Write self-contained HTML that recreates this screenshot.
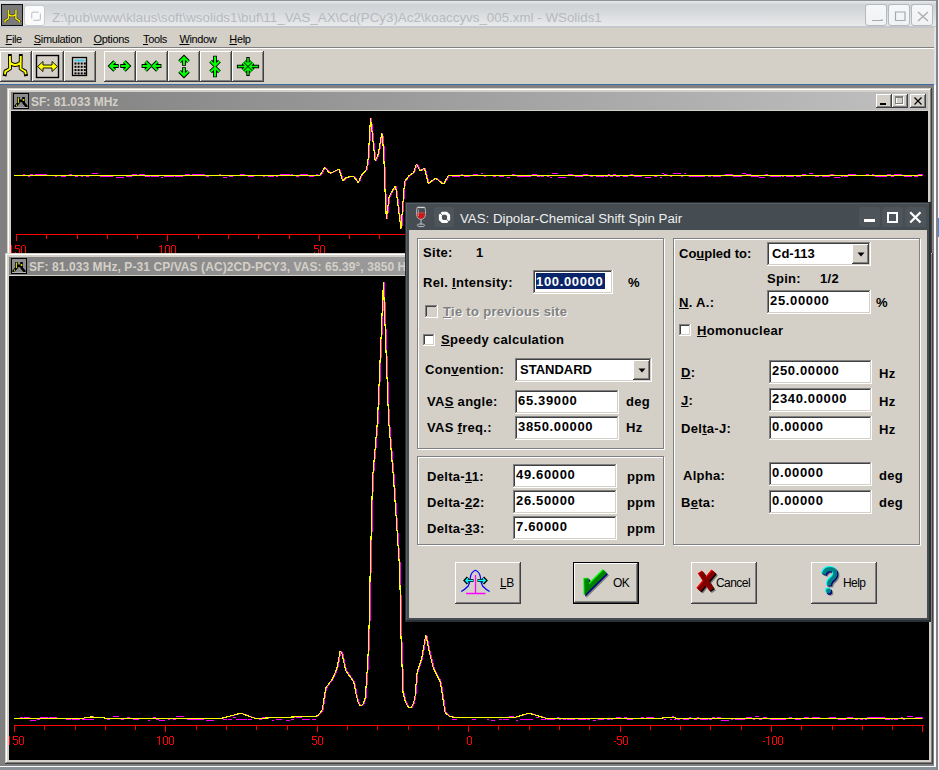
<!DOCTYPE html><html><head><meta charset="utf-8"><style>
html,body{margin:0;padding:0;width:939px;height:770px;overflow:hidden;background:#808080;position:relative}
*{box-sizing:content-box}
.t{position:absolute;white-space:pre;font-family:"Liberation Sans",sans-serif;line-height:1}
.b{font-weight:bold}
svg{position:absolute;left:0;top:0}
</style></head><body><div style="position:absolute;left:0px;top:0px;width:939px;height:28px;background:linear-gradient(#e8eaec 1px,#ced2d5 5px,#d5d8db 11px,#e6e7e9 24px,#e9eaeb 26px,#c4c8cc 26px)"></div><div style="position:absolute;left:0px;top:0px;width:939px;height:1px;background:#8e9297"></div><div style="position:absolute;left:1px;top:4px;width:22px;height:22px;background:#7a7a7a;border:1px solid #111;box-sizing:border-box"></div><svg width="30" height="30" style="left:0;top:0"><g transform="translate(12.2,9.7) scale(0.7) translate(-15.35,-55.9)"><path d="M9.9 55.9 L10.1 68.5 L7.2 70.5 L5.4 71.3 L4.9 74.3 M10.6 63 Q15.3 67 20 63 M20.8 55.9 L20.6 68.5 L23.4 70.5 L25.2 71.3 L25.8 74.3" fill="none" stroke="#202020" stroke-width="3.4" stroke-linejoin="round"/><path d="M9.9 55.9 L10.1 68.5 L7.2 70.5 L5.4 71.3 L4.9 74.3 M10.6 63 Q15.3 67 20 63 M20.8 55.9 L20.6 68.5 L23.4 70.5 L25.2 71.3 L25.8 74.3" fill="none" stroke="#f0e800" stroke-width="2.2" stroke-linejoin="round"/></g></svg><div style="position:absolute;left:24px;top:5px;width:21px;height:21px;background:#fbfbfb;border:1px solid #c8ccd0;border-radius:3px;box-sizing:border-box"></div><svg width="60" height="30" style="left:0;top:0"><path d="M31.7 18.6 L31.7 14 Q31.7 12.2 33.5 12.2 L38.6 12.2 M40.4 13.6 L40.4 18.4 Q40.4 20.3 38.3 20.3 L33.4 20.3" fill="none" stroke="#c4c8cc" stroke-width="1.2"/></svg><div class="t" style="left:52px;top:10.5px;font-size:13.35px;color:#b6babe">Z:\pub\www\klaus\soft\wsolids1\buf\11_VAS_AX\Cd(PCy3)Ac2\koaccyvs_005.xml - WSolids1</div><div style="position:absolute;left:865px;top:4px;width:22px;height:22px;background:linear-gradient(#f6f7f8,#f1f2f3);border:1px solid #b4b9bf;border-radius:3px;box-sizing:border-box"></div><div style="position:absolute;left:888px;top:4px;width:22px;height:22px;background:linear-gradient(#f6f7f8,#f1f2f3);border:1px solid #b4b9bf;border-radius:3px;box-sizing:border-box"></div><div style="position:absolute;left:911px;top:4px;width:22px;height:22px;background:linear-gradient(#f6f7f8,#f1f2f3);border:1px solid #b4b9bf;border-radius:3px;box-sizing:border-box"></div><svg width="939" height="30" style="left:0;top:0" fill="none" stroke="#a4a9ae" stroke-width="1.2"><path d="M872 20.5 L882 20.5 L882 19"/><path d="M895.5 12 L905 12 L905 20.5 L895.5 20.5 Z"/><path d="M918 12 L928 21 M928 12 L918 21"/></svg><div style="position:absolute;left:934px;top:27px;width:2px;height:743px;background:#e4e4e4"></div><div style="position:absolute;left:936px;top:0px;width:2px;height:770px;background:#80868c"></div><div style="position:absolute;left:938px;top:0px;width:1px;height:770px;background:#f4f4f4"></div><div style="position:absolute;left:938px;top:218px;width:1px;height:19px;background:#3a8ee6"></div><div style="position:absolute;left:0px;top:28px;width:934px;height:19px;background:#d4d0c8"></div><div style="position:absolute;left:0px;top:47px;width:934px;height:1px;background:#808080"></div><div style="position:absolute;left:0px;top:48px;width:934px;height:1px;background:#fff"></div><div class="t" style="left:5.5px;top:33.8px;font-size:11px;color:#000;letter-spacing:-0.35px"><u>F</u>ile</div><div class="t" style="left:33.8px;top:33.8px;font-size:11px;color:#000;letter-spacing:-0.35px"><u>S</u>imulation</div><div class="t" style="left:93.6px;top:33.8px;font-size:11px;color:#000;letter-spacing:-0.35px"><u>O</u>ptions</div><div class="t" style="left:143px;top:33.8px;font-size:11px;color:#000;letter-spacing:-0.35px"><u>T</u>ools</div><div class="t" style="left:179.4px;top:33.8px;font-size:11px;color:#000;letter-spacing:-0.35px"><u>W</u>indow</div><div class="t" style="left:229.3px;top:33.8px;font-size:11px;color:#000;letter-spacing:-0.35px"><u>H</u>elp</div><div style="position:absolute;left:0px;top:49px;width:934px;height:35px;background:#d4d0c8"></div><div style="position:absolute;left:0px;top:51px;width:32px;height:31px;background:#404040"></div><div style="position:absolute;left:0px;top:51px;width:31px;height:30px;background:#ffffff"></div><div style="position:absolute;left:1px;top:52px;width:30px;height:29px;background:#808080"></div><div style="position:absolute;left:1px;top:52px;width:29px;height:28px;background:#d4d0c8"></div><div style="position:absolute;left:2px;top:53px;width:28px;height:27px;background:#d4d0c8"></div><div style="position:absolute;left:32px;top:51px;width:32px;height:31px;background:#404040"></div><div style="position:absolute;left:32px;top:51px;width:31px;height:30px;background:#ffffff"></div><div style="position:absolute;left:33px;top:52px;width:30px;height:29px;background:#808080"></div><div style="position:absolute;left:33px;top:52px;width:29px;height:28px;background:#d4d0c8"></div><div style="position:absolute;left:34px;top:53px;width:28px;height:27px;background:#d4d0c8"></div><div style="position:absolute;left:64px;top:51px;width:32px;height:31px;background:#404040"></div><div style="position:absolute;left:64px;top:51px;width:31px;height:30px;background:#ffffff"></div><div style="position:absolute;left:65px;top:52px;width:30px;height:29px;background:#808080"></div><div style="position:absolute;left:65px;top:52px;width:29px;height:28px;background:#d4d0c8"></div><div style="position:absolute;left:66px;top:53px;width:28px;height:27px;background:#d4d0c8"></div><div style="position:absolute;left:104px;top:51px;width:32px;height:31px;background:#404040"></div><div style="position:absolute;left:104px;top:51px;width:31px;height:30px;background:#ffffff"></div><div style="position:absolute;left:105px;top:52px;width:30px;height:29px;background:#808080"></div><div style="position:absolute;left:105px;top:52px;width:29px;height:28px;background:#d4d0c8"></div><div style="position:absolute;left:106px;top:53px;width:28px;height:27px;background:#d4d0c8"></div><div style="position:absolute;left:136px;top:51px;width:32px;height:31px;background:#404040"></div><div style="position:absolute;left:136px;top:51px;width:31px;height:30px;background:#ffffff"></div><div style="position:absolute;left:137px;top:52px;width:30px;height:29px;background:#808080"></div><div style="position:absolute;left:137px;top:52px;width:29px;height:28px;background:#d4d0c8"></div><div style="position:absolute;left:138px;top:53px;width:28px;height:27px;background:#d4d0c8"></div><div style="position:absolute;left:168px;top:51px;width:32px;height:31px;background:#404040"></div><div style="position:absolute;left:168px;top:51px;width:31px;height:30px;background:#ffffff"></div><div style="position:absolute;left:169px;top:52px;width:30px;height:29px;background:#808080"></div><div style="position:absolute;left:169px;top:52px;width:29px;height:28px;background:#d4d0c8"></div><div style="position:absolute;left:170px;top:53px;width:28px;height:27px;background:#d4d0c8"></div><div style="position:absolute;left:200px;top:51px;width:32px;height:31px;background:#404040"></div><div style="position:absolute;left:200px;top:51px;width:31px;height:30px;background:#ffffff"></div><div style="position:absolute;left:201px;top:52px;width:30px;height:29px;background:#808080"></div><div style="position:absolute;left:201px;top:52px;width:29px;height:28px;background:#d4d0c8"></div><div style="position:absolute;left:202px;top:53px;width:28px;height:27px;background:#d4d0c8"></div><div style="position:absolute;left:232px;top:51px;width:32px;height:31px;background:#404040"></div><div style="position:absolute;left:232px;top:51px;width:31px;height:30px;background:#ffffff"></div><div style="position:absolute;left:233px;top:52px;width:30px;height:29px;background:#808080"></div><div style="position:absolute;left:233px;top:52px;width:29px;height:28px;background:#d4d0c8"></div><div style="position:absolute;left:234px;top:53px;width:28px;height:27px;background:#d4d0c8"></div><div style="position:absolute;left:0px;top:84px;width:934px;height:1px;background:#3a6ea5"></div><svg width="300" height="90" style="left:0;top:0"><path d="M9.9 55.9 L10.1 68.5 L7.2 70.5 L5.4 71.3 L4.9 74.3 M10.6 63 Q15.3 67 20 63 M20.8 55.9 L20.6 68.5 L23.4 70.5 L25.2 71.3 L25.8 74.3" fill="none" stroke="#000" stroke-width="3.8" stroke-linejoin="round" stroke-linecap="square"/><path d="M9.9 55.9 L10.1 68.5 L7.2 70.5 L5.4 71.3 L4.9 74.3 M10.6 63 Q15.3 67 20 63 M20.8 55.9 L20.6 68.5 L23.4 70.5 L25.2 71.3 L25.8 74.3" fill="none" stroke="#ffff00" stroke-width="1.9" stroke-linejoin="round" stroke-linecap="butt"/><rect x="36.5" y="55.5" width="22" height="22" fill="none" stroke="#000" stroke-width="1.4"/><path d="M37.5 66.5 L43 61.5 L43 65 L52 65 L52 61.5 L57.5 66.5 L52 71.5 L52 68 L43 68 L43 71.5 Z" fill="#ffff00" stroke="#000" stroke-width="0.9"/><rect x="72.5" y="57.5" width="14" height="18" fill="#d4d0c8" stroke="#000" stroke-width="1.3"/><rect x="74.5" y="59.5" width="10" height="2" fill="#40c8e8"/><rect x="74.5" y="62.5" width="2" height="2" fill="#000"/><rect x="77.6" y="62.5" width="2" height="2" fill="#000"/><rect x="80.7" y="62.5" width="2" height="2" fill="#000"/><rect x="83.8" y="62.5" width="2" height="2" fill="#000"/><rect x="74.5" y="65.8" width="2" height="2" fill="#000"/><rect x="77.6" y="65.8" width="2" height="2" fill="#000"/><rect x="80.7" y="65.8" width="2" height="2" fill="#000"/><rect x="83.8" y="65.8" width="2" height="2" fill="#000"/><rect x="74.5" y="69.1" width="2" height="2" fill="#000"/><rect x="77.6" y="69.1" width="2" height="2" fill="#000"/><rect x="80.7" y="69.1" width="2" height="2" fill="#000"/><rect x="83.8" y="69.1" width="2" height="2" fill="#000"/><rect x="74.5" y="72.4" width="2" height="2" fill="#000"/><rect x="77.6" y="72.4" width="2" height="2" fill="#000"/><rect x="80.7" y="72.4" width="2" height="2" fill="#000"/><rect x="83.8" y="72.4" width="2" height="2" fill="#000"/></svg><svg width="300" height="90" style="left:0;top:0" fill="none" stroke-linejoin="miter" stroke-miterlimit="4" stroke-linecap="butt"><path d="M118.7 66.0 L110.3 66 M114.7 61.6 L110.3 66 L114.7 70.4 M120.29999999999998 66.0 L128.7 66 M124.29999999999998 70.4 L128.7 66 L124.29999999999998 61.6 M141.6 66.0 L150 66 M145.6 70.4 L150 66 L145.6 61.6 M161.4 66.0 L153 66 M157.4 61.6 L153 66 L157.4 70.4 M184.0 65.7 L184 57.3 M188.4 61.699999999999996 L184 57.3 L179.6 61.699999999999996 M184.0 67.3 L184 75.7 M179.6 71.3 L184 75.7 L188.4 71.3 M215.0 55.8 L215 65.6 M210.6 61.199999999999996 L215 65.6 L219.4 61.199999999999996 M215.0 77.2 L215 67.4 M219.4 71.80000000000001 L215 67.4 L210.6 71.80000000000001" stroke="#000" stroke-width="3.8"/><path d="M248 56.900000000000006 L248 64.9 M244.5 61.400000000000006 L248 64.9 L251.5 61.400000000000006 M248 76.1 L248 68.1 M251.5 71.6 L248 68.1 L244.5 71.6 M236.9 66.5 L246.4 66.5 M242.9 70.0 L246.4 66.5 L242.9 63.0 M259.1 66.5 L249.6 66.5 M253.1 63.0 L249.6 66.5 L253.1 70.0" stroke="#000" stroke-width="3.4"/><path d="M117.89999999999999 66.0 L110.3 66 M114.7 61.6 L110.3 66 L114.7 70.4 M121.1 66.0 L128.7 66 M124.29999999999998 70.4 L128.7 66 L124.29999999999998 61.6 M142.4 66.0 L150 66 M145.6 70.4 L150 66 L145.6 61.6 M160.6 66.0 L153 66 M157.4 61.6 L153 66 L157.4 70.4 M184.0 64.89999999999999 L184 57.3 M188.4 61.699999999999996 L184 57.3 L179.6 61.699999999999996 M184.0 68.10000000000001 L184 75.7 M179.6 71.3 L184 75.7 L188.4 71.3 M215 56.599999999999994 L215 65.6 M210.6 61.199999999999996 L215 65.6 L219.4 61.199999999999996 M215 76.4 L215 67.4 M219.4 71.80000000000001 L215 67.4 L210.6 71.80000000000001" stroke="#00ff00" stroke-width="2"/><path d="M248 57.900000000000006 L248 64.9 M244.5 61.400000000000006 L248 64.9 L251.5 61.400000000000006 M248 75.1 L248 68.1 M251.5 71.6 L248 68.1 L244.5 71.6 M237.9 66.5 L246.4 66.5 M242.9 70.0 L246.4 66.5 L242.9 63.0 M258.1 66.5 L249.6 66.5 M253.1 63.0 L249.6 66.5 L253.1 70.0" stroke="#00ff00" stroke-width="1.5"/></svg><div style="position:absolute;left:7px;top:88px;width:925px;height:200px;background:#404040"></div><div style="position:absolute;left:7px;top:88px;width:924px;height:199px;background:#d4d0c8"></div><div style="position:absolute;left:8px;top:89px;width:923px;height:198px;background:#808080"></div><div style="position:absolute;left:8px;top:89px;width:922px;height:197px;background:#fff"></div><div style="position:absolute;left:9px;top:90px;width:921px;height:196px;background:#d4d0c8"></div><div style="position:absolute;left:11px;top:92px;width:917px;height:18px;background:linear-gradient(90deg,#808080,#c0c0c0)"></div><div style="position:absolute;left:11px;top:111px;width:917px;height:170px;background:#000"></div><div style="position:absolute;left:5px;top:253px;width:928px;height:511px;background:#404040"></div><div style="position:absolute;left:5px;top:253px;width:927px;height:510px;background:#d4d0c8"></div><div style="position:absolute;left:6px;top:254px;width:926px;height:509px;background:#808080"></div><div style="position:absolute;left:6px;top:254px;width:925px;height:508px;background:#fff"></div><div style="position:absolute;left:7px;top:255px;width:924px;height:507px;background:#d4d0c8"></div><div style="position:absolute;left:9px;top:257px;width:920px;height:18px;background:linear-gradient(90deg,#808080,#c0c0c0)"></div><div style="position:absolute;left:9px;top:276px;width:920px;height:484px;background:#000"></div><div style="position:absolute;left:0px;top:766px;width:936px;height:1px;background:#fafafa"></div><div style="position:absolute;left:0px;top:767px;width:936px;height:3px;background:#8a9098"></div><div style="position:absolute;left:934px;top:85px;width:2px;height:681px;background:#fafafa"></div><div style="position:absolute;left:13px;top:93px;width:16px;height:16px;background:#000"></div><div style="position:absolute;left:14px;top:94px;width:14px;height:14px;background:#8c8c8c"></div><svg width="16" height="16" style="left:13px;top:93px"><path d="M2 14 L4 11.5 L5.3 10 L5.5 4 M5.5 9 L8 7.5 L10.5 9 M10.5 4 L10.7 10 L12 11.5 L14 14" fill="none" stroke="#000" stroke-width="2.6" stroke-linejoin="round"/><path d="M5.4 4.5 L5.4 10" stroke="#d8d800" stroke-width="1.1"/><circle cx="10.5" cy="7" r="1" fill="#e0e000"/><rect x="3" y="11.5" width="1" height="2" fill="#c8c800"/><rect x="1" y="14" width="14" height="1" fill="#b0b0b0"/></svg><div class="t" style="left:31px;top:96px;font-size:12px;font-weight:bold;color:#d4d0c8">SF: 81.033 MHz</div><div style="position:absolute;left:11px;top:258px;width:16px;height:16px;background:#000"></div><div style="position:absolute;left:12px;top:259px;width:14px;height:14px;background:#8c8c8c"></div><svg width="16" height="16" style="left:11px;top:258px"><path d="M2 14 L4 11.5 L5.3 10 L5.5 4 M5.5 9 L8 7.5 L10.5 9 M10.5 4 L10.7 10 L12 11.5 L14 14" fill="none" stroke="#000" stroke-width="2.6" stroke-linejoin="round"/><path d="M5.4 4.5 L5.4 10" stroke="#d8d800" stroke-width="1.1"/><circle cx="10.5" cy="7" r="1" fill="#e0e000"/><rect x="3" y="11.5" width="1" height="2" fill="#c8c800"/><rect x="1" y="14" width="14" height="1" fill="#b0b0b0"/></svg><div class="t" style="left:29px;top:261px;font-size:12px;font-weight:bold;color:#d4d0c8;letter-spacing:0.08px">SF: 81.033 MHz, P-31 CP/VAS (AC)2CD-PCY3, VAS: 65.39°, 3850 Hz</div><div style="position:absolute;left:876px;top:94px;width:16px;height:14px;background:#404040"></div><div style="position:absolute;left:876px;top:94px;width:15px;height:13px;background:#ffffff"></div><div style="position:absolute;left:877px;top:95px;width:14px;height:12px;background:#808080"></div><div style="position:absolute;left:877px;top:95px;width:13px;height:11px;background:#d4d0c8"></div><div style="position:absolute;left:878px;top:96px;width:12px;height:10px;background:#d4d0c8"></div><div style="position:absolute;left:880px;top:103px;width:6px;height:1.5px;background:#000"></div><div style="position:absolute;left:892px;top:94px;width:16px;height:14px;background:#404040"></div><div style="position:absolute;left:892px;top:94px;width:15px;height:13px;background:#ffffff"></div><div style="position:absolute;left:893px;top:95px;width:14px;height:12px;background:#808080"></div><div style="position:absolute;left:893px;top:95px;width:13px;height:11px;background:#d4d0c8"></div><div style="position:absolute;left:894px;top:96px;width:12px;height:10px;background:#d4d0c8"></div><div style="position:absolute;left:896px;top:97px;width:8px;height:8px;border:1px solid #fff;box-sizing:border-box"></div><div style="position:absolute;left:895px;top:96px;width:8px;height:8px;border:1px solid #808080;border-top-width:2px;box-sizing:border-box"></div><div style="position:absolute;left:910px;top:94px;width:16px;height:14px;background:#404040"></div><div style="position:absolute;left:910px;top:94px;width:15px;height:13px;background:#ffffff"></div><div style="position:absolute;left:911px;top:95px;width:14px;height:12px;background:#808080"></div><div style="position:absolute;left:911px;top:95px;width:13px;height:11px;background:#d4d0c8"></div><div style="position:absolute;left:912px;top:96px;width:12px;height:10px;background:#d4d0c8"></div><svg width="16" height="14" style="left:910px;top:94px"><path d="M4.5 3.5 L11.5 10.5 M11.5 3.5 L4.5 10.5" stroke="#000" stroke-width="1.2"/></svg><svg width="939" height="770" style="left:0;top:0"><defs><clipPath id="c1"><rect x="11" y="111" width="917" height="142"/></clipPath><clipPath id="c2"><rect x="9" y="276" width="920" height="484"/></clipPath></defs><g clip-path="url(#c1)"><path d="M16 234.5 L926 234.5" stroke="#ff0000" stroke-width="1"/><path d="M924.5 234 L924.5 241" stroke="#ff0000" stroke-width="1"/><path d="M894.5 234 L894.5 239" stroke="#ff0000" stroke-width="1"/><path d="M864.5 234 L864.5 239" stroke="#ff0000" stroke-width="1"/><path d="M834.5 234 L834.5 239" stroke="#ff0000" stroke-width="1"/><path d="M803.5 234 L803.5 239" stroke="#ff0000" stroke-width="1"/><path d="M773.5 234 L773.5 241" stroke="#ff0000" stroke-width="1"/><path d="M743.5 234 L743.5 239" stroke="#ff0000" stroke-width="1"/><path d="M712.5 234 L712.5 239" stroke="#ff0000" stroke-width="1"/><path d="M682.5 234 L682.5 239" stroke="#ff0000" stroke-width="1"/><path d="M652.5 234 L652.5 239" stroke="#ff0000" stroke-width="1"/><path d="M622.5 234 L622.5 241" stroke="#ff0000" stroke-width="1"/><path d="M591.5 234 L591.5 239" stroke="#ff0000" stroke-width="1"/><path d="M561.5 234 L561.5 239" stroke="#ff0000" stroke-width="1"/><path d="M531.5 234 L531.5 239" stroke="#ff0000" stroke-width="1"/><path d="M500.5 234 L500.5 239" stroke="#ff0000" stroke-width="1"/><path d="M470.5 234 L470.5 241" stroke="#ff0000" stroke-width="1"/><path d="M440.5 234 L440.5 239" stroke="#ff0000" stroke-width="1"/><path d="M410.5 234 L410.5 239" stroke="#ff0000" stroke-width="1"/><path d="M379.5 234 L379.5 239" stroke="#ff0000" stroke-width="1"/><path d="M349.5 234 L349.5 239" stroke="#ff0000" stroke-width="1"/><path d="M319.5 234 L319.5 241" stroke="#ff0000" stroke-width="1"/><path d="M289.5 234 L289.5 239" stroke="#ff0000" stroke-width="1"/><path d="M258.5 234 L258.5 239" stroke="#ff0000" stroke-width="1"/><path d="M228.5 234 L228.5 239" stroke="#ff0000" stroke-width="1"/><path d="M198.5 234 L198.5 239" stroke="#ff0000" stroke-width="1"/><path d="M167.5 234 L167.5 241" stroke="#ff0000" stroke-width="1"/><path d="M137.5 234 L137.5 239" stroke="#ff0000" stroke-width="1"/><path d="M107.5 234 L107.5 239" stroke="#ff0000" stroke-width="1"/><path d="M77.5 234 L77.5 239" stroke="#ff0000" stroke-width="1"/><path d="M46.5 234 L46.5 239" stroke="#ff0000" stroke-width="1"/><path d="M16.5 234 L16.5 241" stroke="#ff0000" stroke-width="1"/><path d="M11 245h1v1h-1zM9 246h3v1h-3zM11 247h1v1h-1zM11 248h1v1h-1zM11 249h1v1h-1zM11 250h1v1h-1zM11 251h1v1h-1zM11 252h1v1h-1zM11 253h1v1h-1zM15 245h5v1h-5zM15 246h1v1h-1zM15 247h1v1h-1zM15 248h4v1h-4zM19 249h1v1h-1zM19 250h1v1h-1zM19 251h1v1h-1zM15 252h1v1h-1zM19 252h1v1h-1zM16 253h3v1h-3zM22 245h3v1h-3zM21 246h1v1h-1zM25 246h1v1h-1zM21 247h1v1h-1zM25 247h1v1h-1zM21 248h1v1h-1zM25 248h1v1h-1zM21 249h1v1h-1zM25 249h1v1h-1zM21 250h1v1h-1zM25 250h1v1h-1zM21 251h1v1h-1zM25 251h1v1h-1zM21 252h1v1h-1zM25 252h1v1h-1zM22 253h3v1h-3zM161 245h1v1h-1zM159 246h3v1h-3zM161 247h1v1h-1zM161 248h1v1h-1zM161 249h1v1h-1zM161 250h1v1h-1zM161 251h1v1h-1zM161 252h1v1h-1zM161 253h1v1h-1zM166 245h3v1h-3zM165 246h1v1h-1zM169 246h1v1h-1zM165 247h1v1h-1zM169 247h1v1h-1zM165 248h1v1h-1zM169 248h1v1h-1zM165 249h1v1h-1zM169 249h1v1h-1zM165 250h1v1h-1zM169 250h1v1h-1zM165 251h1v1h-1zM169 251h1v1h-1zM165 252h1v1h-1zM169 252h1v1h-1zM166 253h3v1h-3zM172 245h3v1h-3zM171 246h1v1h-1zM175 246h1v1h-1zM171 247h1v1h-1zM175 247h1v1h-1zM171 248h1v1h-1zM175 248h1v1h-1zM171 249h1v1h-1zM175 249h1v1h-1zM171 250h1v1h-1zM175 250h1v1h-1zM171 251h1v1h-1zM175 251h1v1h-1zM171 252h1v1h-1zM175 252h1v1h-1zM172 253h3v1h-3zM314 245h5v1h-5zM314 246h1v1h-1zM314 247h1v1h-1zM314 248h4v1h-4zM318 249h1v1h-1zM318 250h1v1h-1zM318 251h1v1h-1zM314 252h1v1h-1zM318 252h1v1h-1zM315 253h3v1h-3zM321 245h3v1h-3zM320 246h1v1h-1zM324 246h1v1h-1zM320 247h1v1h-1zM324 247h1v1h-1zM320 248h1v1h-1zM324 248h1v1h-1zM320 249h1v1h-1zM324 249h1v1h-1zM320 250h1v1h-1zM324 250h1v1h-1zM320 251h1v1h-1zM324 251h1v1h-1zM320 252h1v1h-1zM324 252h1v1h-1zM321 253h3v1h-3zM470 245h3v1h-3zM469 246h1v1h-1zM473 246h1v1h-1zM469 247h1v1h-1zM473 247h1v1h-1zM469 248h1v1h-1zM473 248h1v1h-1zM469 249h1v1h-1zM473 249h1v1h-1zM469 250h1v1h-1zM473 250h1v1h-1zM469 251h1v1h-1zM473 251h1v1h-1zM469 252h1v1h-1zM473 252h1v1h-1zM470 253h3v1h-3zM616 250h2v1h-2zM619 245h5v1h-5zM619 246h1v1h-1zM619 247h1v1h-1zM619 248h4v1h-4zM623 249h1v1h-1zM623 250h1v1h-1zM623 251h1v1h-1zM619 252h1v1h-1zM623 252h1v1h-1zM620 253h3v1h-3zM626 245h3v1h-3zM625 246h1v1h-1zM629 246h1v1h-1zM625 247h1v1h-1zM629 247h1v1h-1zM625 248h1v1h-1zM629 248h1v1h-1zM625 249h1v1h-1zM629 249h1v1h-1zM625 250h1v1h-1zM629 250h1v1h-1zM625 251h1v1h-1zM629 251h1v1h-1zM625 252h1v1h-1zM629 252h1v1h-1zM626 253h3v1h-3zM765 250h2v1h-2zM770 245h1v1h-1zM768 246h3v1h-3zM770 247h1v1h-1zM770 248h1v1h-1zM770 249h1v1h-1zM770 250h1v1h-1zM770 251h1v1h-1zM770 252h1v1h-1zM770 253h1v1h-1zM775 245h3v1h-3zM774 246h1v1h-1zM778 246h1v1h-1zM774 247h1v1h-1zM778 247h1v1h-1zM774 248h1v1h-1zM778 248h1v1h-1zM774 249h1v1h-1zM778 249h1v1h-1zM774 250h1v1h-1zM778 250h1v1h-1zM774 251h1v1h-1zM778 251h1v1h-1zM774 252h1v1h-1zM778 252h1v1h-1zM775 253h3v1h-3zM781 245h3v1h-3zM780 246h1v1h-1zM784 246h1v1h-1zM780 247h1v1h-1zM784 247h1v1h-1zM780 248h1v1h-1zM784 248h1v1h-1zM780 249h1v1h-1zM784 249h1v1h-1zM780 250h1v1h-1zM784 250h1v1h-1zM780 251h1v1h-1zM784 251h1v1h-1zM780 252h1v1h-1zM784 252h1v1h-1zM781 253h3v1h-3z" fill="#ff0000"/><path d="M14.0 175.0 L318.70 175.00 Q320.0 175.0 320.64 173.87 L323.86 168.13 Q324.5 167.0 325.38 167.96 L329.12 172.04 Q330.0 173.0 331.17 172.43 L337.83 169.17 Q339.0 168.6 339.39 169.84 L342.31 179.26 Q342.7 180.5 343.62 179.58 L345.48 177.72 Q346.4 176.8 347.69 176.64 L352.31 176.06 Q353.6 175.9 354.36 176.96 L357.44 181.24 Q358.2 182.3 358.72 181.11 L361.28 175.19 Q361.8 174.0 362.73 173.09 L365.47 170.41 Q366.4 169.5 366.60 168.21 L368.00 158.99 Q368.2 157.7 368.27 156.40 L370.43 118.30 Q370.5 117.0 370.64 118.29 L372.56 136.41 Q372.7 137.7 372.84 138.99 L374.96 159.21 Q375.1 160.5 375.66 159.33 L377.64 155.17 Q378.2 154.0 378.41 152.72 L381.59 133.58 Q381.8 132.3 381.93 133.59 L383.47 149.21 Q383.6 150.5 383.65 151.80 L385.45 201.90 Q385.5 203.2 385.58 204.50 L386.32 217.30 Q386.4 218.6 386.55 217.31 L388.95 197.19 Q389.1 195.9 389.76 194.78 L394.84 186.12 Q395.5 185.0 395.66 186.29 L400.74 227.31 Q400.9 228.6 401.00 227.30 L404.40 182.70 Q404.5 181.4 405.25 180.34 L408.25 176.06 Q409.0 175.0 410.12 174.34 L412.48 172.96 Q413.6 172.3 413.98 171.06 L416.02 164.44 Q416.4 163.2 416.97 164.37 L419.43 169.33 Q420.0 170.5 421.10 169.81 L423.40 168.39 Q424.5 167.7 424.80 168.96 L427.90 181.94 Q428.2 183.2 429.24 182.42 L434.46 178.48 Q435.5 177.7 436.53 178.50 L442.57 183.20 Q443.6 184.0 444.19 182.84 L447.61 176.16 Q448.2 175.0 449.50 175.00 L922.0 175.0" fill="none" stroke="#ff00ff" stroke-width="1.1" transform="translate(0.8,0.45)" shape-rendering="crispEdges"/><rect x="23" y="174" width="2" height="1" fill="#ff00ff"/><rect x="28" y="176" width="2" height="1" fill="#ff00ff"/><rect x="30" y="174" width="3" height="1" fill="#ff00ff"/><rect x="35" y="174" width="6" height="1" fill="#ff00ff"/><rect x="41" y="174" width="6" height="1" fill="#ff00ff"/><rect x="55" y="176" width="2" height="1" fill="#ff00ff"/><rect x="61" y="176" width="3" height="1" fill="#ff00ff"/><rect x="64" y="176" width="2" height="1" fill="#ff00ff"/><rect x="69" y="174" width="3" height="1" fill="#ff00ff"/><rect x="75" y="176" width="3" height="1" fill="#ff00ff"/><rect x="81" y="176" width="2" height="1" fill="#ff00ff"/><rect x="86" y="176" width="3" height="1" fill="#ff00ff"/><rect x="92" y="173" width="6" height="1" fill="#ff00ff"/><rect x="100" y="176" width="8" height="1" fill="#ff00ff"/><rect x="108" y="176" width="3" height="1" fill="#ff00ff"/><rect x="111" y="176" width="2" height="1" fill="#ff00ff"/><rect x="116" y="177" width="8" height="1" fill="#ff00ff"/><rect x="126" y="176" width="4" height="1" fill="#ff00ff"/><rect x="130" y="176" width="2" height="1" fill="#ff00ff"/><rect x="132" y="174" width="5" height="1" fill="#ff00ff"/><rect x="139" y="174" width="6" height="1" fill="#ff00ff"/><rect x="145" y="176" width="5" height="1" fill="#ff00ff"/><rect x="151" y="176" width="8" height="1" fill="#ff00ff"/><rect x="161" y="177" width="2" height="1" fill="#ff00ff"/><rect x="164" y="176" width="8" height="1" fill="#ff00ff"/><rect x="172" y="176" width="2" height="1" fill="#ff00ff"/><rect x="175" y="176" width="8" height="1" fill="#ff00ff"/><rect x="185" y="174" width="5" height="1" fill="#ff00ff"/><rect x="192" y="174" width="5" height="1" fill="#ff00ff"/><rect x="197" y="174" width="8" height="1" fill="#ff00ff"/><rect x="206" y="176" width="3" height="1" fill="#ff00ff"/><rect x="219" y="174" width="2" height="1" fill="#ff00ff"/><rect x="223" y="177" width="4" height="1" fill="#ff00ff"/><rect x="229" y="176" width="4" height="1" fill="#ff00ff"/><rect x="240" y="174" width="2" height="1" fill="#ff00ff"/><rect x="242" y="174" width="3" height="1" fill="#ff00ff"/><rect x="248" y="176" width="3" height="1" fill="#ff00ff"/><rect x="251" y="176" width="3" height="1" fill="#ff00ff"/><rect x="263" y="176" width="2" height="1" fill="#ff00ff"/><rect x="268" y="176" width="6" height="1" fill="#ff00ff"/><rect x="276" y="176" width="2" height="1" fill="#ff00ff"/><rect x="280" y="174" width="2" height="1" fill="#ff00ff"/><rect x="282" y="174" width="8" height="1" fill="#ff00ff"/><rect x="291" y="174" width="2" height="1" fill="#ff00ff"/><rect x="296" y="176" width="3" height="1" fill="#ff00ff"/><rect x="300" y="174" width="2" height="1" fill="#ff00ff"/><rect x="302" y="174" width="6" height="1" fill="#ff00ff"/><rect x="309" y="176" width="5" height="1" fill="#ff00ff"/><rect x="316" y="174" width="2" height="1" fill="#ff00ff"/><rect x="452" y="176" width="8" height="1" fill="#ff00ff"/><rect x="461" y="174" width="2" height="1" fill="#ff00ff"/><rect x="464" y="176" width="4" height="1" fill="#ff00ff"/><rect x="468" y="176" width="2" height="1" fill="#ff00ff"/><rect x="473" y="174" width="5" height="1" fill="#ff00ff"/><rect x="481" y="173" width="2" height="1" fill="#ff00ff"/><rect x="484" y="176" width="2" height="1" fill="#ff00ff"/><rect x="493" y="176" width="3" height="1" fill="#ff00ff"/><rect x="499" y="176" width="5" height="1" fill="#ff00ff"/><rect x="507" y="177" width="3" height="1" fill="#ff00ff"/><rect x="512" y="174" width="3" height="1" fill="#ff00ff"/><rect x="517" y="176" width="5" height="1" fill="#ff00ff"/><rect x="522" y="176" width="4" height="1" fill="#ff00ff"/><rect x="526" y="176" width="5" height="1" fill="#ff00ff"/><rect x="532" y="174" width="5" height="1" fill="#ff00ff"/><rect x="537" y="176" width="3" height="1" fill="#ff00ff"/><rect x="541" y="176" width="3" height="1" fill="#ff00ff"/><rect x="547" y="176" width="2" height="1" fill="#ff00ff"/><rect x="550" y="177" width="2" height="1" fill="#ff00ff"/><rect x="552" y="173" width="6" height="1" fill="#ff00ff"/><rect x="558" y="177" width="8" height="1" fill="#ff00ff"/><rect x="568" y="174" width="5" height="1" fill="#ff00ff"/><rect x="575" y="176" width="8" height="1" fill="#ff00ff"/><rect x="583" y="174" width="3" height="1" fill="#ff00ff"/><rect x="586" y="174" width="2" height="1" fill="#ff00ff"/><rect x="590" y="176" width="3" height="1" fill="#ff00ff"/><rect x="596" y="176" width="8" height="1" fill="#ff00ff"/><rect x="605" y="176" width="3" height="1" fill="#ff00ff"/><rect x="608" y="174" width="2" height="1" fill="#ff00ff"/><rect x="610" y="176" width="3" height="1" fill="#ff00ff"/><rect x="613" y="174" width="3" height="1" fill="#ff00ff"/><rect x="616" y="176" width="4" height="1" fill="#ff00ff"/><rect x="623" y="176" width="5" height="1" fill="#ff00ff"/><rect x="630" y="174" width="3" height="1" fill="#ff00ff"/><rect x="634" y="176" width="8" height="1" fill="#ff00ff"/><rect x="645" y="177" width="6" height="1" fill="#ff00ff"/><rect x="654" y="176" width="3" height="1" fill="#ff00ff"/><rect x="660" y="177" width="2" height="1" fill="#ff00ff"/><rect x="662" y="173" width="2" height="1" fill="#ff00ff"/><rect x="664" y="174" width="3" height="1" fill="#ff00ff"/><rect x="670" y="176" width="2" height="1" fill="#ff00ff"/><rect x="673" y="173" width="8" height="1" fill="#ff00ff"/><rect x="681" y="176" width="2" height="1" fill="#ff00ff"/><rect x="684" y="173" width="2" height="1" fill="#ff00ff"/><rect x="689" y="176" width="8" height="1" fill="#ff00ff"/><rect x="697" y="176" width="8" height="1" fill="#ff00ff"/><rect x="708" y="176" width="3" height="1" fill="#ff00ff"/><rect x="713" y="176" width="8" height="1" fill="#ff00ff"/><rect x="725" y="174" width="8" height="1" fill="#ff00ff"/><rect x="733" y="176" width="6" height="1" fill="#ff00ff"/><rect x="739" y="176" width="3" height="1" fill="#ff00ff"/><rect x="742" y="173" width="4" height="1" fill="#ff00ff"/><rect x="746" y="174" width="5" height="1" fill="#ff00ff"/><rect x="751" y="176" width="8" height="1" fill="#ff00ff"/><rect x="759" y="177" width="6" height="1" fill="#ff00ff"/><rect x="765" y="174" width="3" height="1" fill="#ff00ff"/><rect x="770" y="176" width="6" height="1" fill="#ff00ff"/><rect x="776" y="176" width="5" height="1" fill="#ff00ff"/><rect x="782" y="176" width="2" height="1" fill="#ff00ff"/><rect x="786" y="176" width="8" height="1" fill="#ff00ff"/><rect x="796" y="176" width="5" height="1" fill="#ff00ff"/><rect x="802" y="174" width="2" height="1" fill="#ff00ff"/><rect x="804" y="174" width="2" height="1" fill="#ff00ff"/><rect x="809" y="173" width="4" height="1" fill="#ff00ff"/><rect x="815" y="176" width="4" height="1" fill="#ff00ff"/><rect x="822" y="176" width="8" height="1" fill="#ff00ff"/><rect x="830" y="174" width="4" height="1" fill="#ff00ff"/><rect x="834" y="177" width="6" height="1" fill="#ff00ff"/><rect x="841" y="176" width="2" height="1" fill="#ff00ff"/><rect x="844" y="176" width="2" height="1" fill="#ff00ff"/><rect x="846" y="176" width="2" height="1" fill="#ff00ff"/><rect x="848" y="174" width="8" height="1" fill="#ff00ff"/><rect x="866" y="174" width="3" height="1" fill="#ff00ff"/><rect x="872" y="174" width="2" height="1" fill="#ff00ff"/><rect x="875" y="176" width="4" height="1" fill="#ff00ff"/><rect x="879" y="176" width="4" height="1" fill="#ff00ff"/><rect x="883" y="176" width="4" height="1" fill="#ff00ff"/><rect x="887" y="174" width="4" height="1" fill="#ff00ff"/><rect x="891" y="176" width="3" height="1" fill="#ff00ff"/><rect x="894" y="174" width="8" height="1" fill="#ff00ff"/><rect x="904" y="176" width="8" height="1" fill="#ff00ff"/><rect x="914" y="176" width="4" height="1" fill="#ff00ff"/><rect x="918" y="174" width="5" height="1" fill="#ff00ff"/><path d="M14.0 175.0 L318.70 175.00 Q320.0 175.0 320.64 173.87 L323.86 168.13 Q324.5 167.0 325.38 167.96 L329.12 172.04 Q330.0 173.0 331.17 172.43 L337.83 169.17 Q339.0 168.6 339.39 169.84 L342.31 179.26 Q342.7 180.5 343.62 179.58 L345.48 177.72 Q346.4 176.8 347.69 176.64 L352.31 176.06 Q353.6 175.9 354.36 176.96 L357.44 181.24 Q358.2 182.3 358.72 181.11 L361.28 175.19 Q361.8 174.0 362.73 173.09 L365.47 170.41 Q366.4 169.5 366.60 168.21 L368.00 158.99 Q368.2 157.7 368.27 156.40 L370.43 118.30 Q370.5 117.0 370.64 118.29 L372.56 136.41 Q372.7 137.7 372.84 138.99 L374.96 159.21 Q375.1 160.5 375.66 159.33 L377.64 155.17 Q378.2 154.0 378.41 152.72 L381.59 133.58 Q381.8 132.3 381.93 133.59 L383.47 149.21 Q383.6 150.5 383.65 151.80 L385.45 201.90 Q385.5 203.2 385.58 204.50 L386.32 217.30 Q386.4 218.6 386.55 217.31 L388.95 197.19 Q389.1 195.9 389.76 194.78 L394.84 186.12 Q395.5 185.0 395.66 186.29 L400.74 227.31 Q400.9 228.6 401.00 227.30 L404.40 182.70 Q404.5 181.4 405.25 180.34 L408.25 176.06 Q409.0 175.0 410.12 174.34 L412.48 172.96 Q413.6 172.3 413.98 171.06 L416.02 164.44 Q416.4 163.2 416.97 164.37 L419.43 169.33 Q420.0 170.5 421.10 169.81 L423.40 168.39 Q424.5 167.7 424.80 168.96 L427.90 181.94 Q428.2 183.2 429.24 182.42 L434.46 178.48 Q435.5 177.7 436.53 178.50 L442.57 183.20 Q443.6 184.0 444.19 182.84 L447.61 176.16 Q448.2 175.0 449.50 175.00 L922.0 175.0" fill="none" stroke="#ffff00" stroke-width="1.1" transform="translate(0,0.45)" shape-rendering="crispEdges"/></g><g clip-path="url(#c2)"><path d="M14 725.5 L924 725.5" stroke="#ff0000" stroke-width="1"/><path d="M922.5 725 L922.5 732" stroke="#ff0000" stroke-width="1"/><path d="M892.5 725 L892.5 730" stroke="#ff0000" stroke-width="1"/><path d="M862.5 725 L862.5 730" stroke="#ff0000" stroke-width="1"/><path d="M832.5 725 L832.5 730" stroke="#ff0000" stroke-width="1"/><path d="M801.5 725 L801.5 730" stroke="#ff0000" stroke-width="1"/><path d="M771.5 725 L771.5 732" stroke="#ff0000" stroke-width="1"/><path d="M741.5 725 L741.5 730" stroke="#ff0000" stroke-width="1"/><path d="M710.5 725 L710.5 730" stroke="#ff0000" stroke-width="1"/><path d="M680.5 725 L680.5 730" stroke="#ff0000" stroke-width="1"/><path d="M650.5 725 L650.5 730" stroke="#ff0000" stroke-width="1"/><path d="M620.5 725 L620.5 732" stroke="#ff0000" stroke-width="1"/><path d="M589.5 725 L589.5 730" stroke="#ff0000" stroke-width="1"/><path d="M559.5 725 L559.5 730" stroke="#ff0000" stroke-width="1"/><path d="M529.5 725 L529.5 730" stroke="#ff0000" stroke-width="1"/><path d="M498.5 725 L498.5 730" stroke="#ff0000" stroke-width="1"/><path d="M468.5 725 L468.5 732" stroke="#ff0000" stroke-width="1"/><path d="M438.5 725 L438.5 730" stroke="#ff0000" stroke-width="1"/><path d="M408.5 725 L408.5 730" stroke="#ff0000" stroke-width="1"/><path d="M377.5 725 L377.5 730" stroke="#ff0000" stroke-width="1"/><path d="M347.5 725 L347.5 730" stroke="#ff0000" stroke-width="1"/><path d="M317.5 725 L317.5 732" stroke="#ff0000" stroke-width="1"/><path d="M287.5 725 L287.5 730" stroke="#ff0000" stroke-width="1"/><path d="M256.5 725 L256.5 730" stroke="#ff0000" stroke-width="1"/><path d="M226.5 725 L226.5 730" stroke="#ff0000" stroke-width="1"/><path d="M196.5 725 L196.5 730" stroke="#ff0000" stroke-width="1"/><path d="M165.5 725 L165.5 732" stroke="#ff0000" stroke-width="1"/><path d="M135.5 725 L135.5 730" stroke="#ff0000" stroke-width="1"/><path d="M105.5 725 L105.5 730" stroke="#ff0000" stroke-width="1"/><path d="M75.5 725 L75.5 730" stroke="#ff0000" stroke-width="1"/><path d="M44.5 725 L44.5 730" stroke="#ff0000" stroke-width="1"/><path d="M14.5 725 L14.5 732" stroke="#ff0000" stroke-width="1"/><path d="M9 736h1v1h-1zM7 737h3v1h-3zM9 738h1v1h-1zM9 739h1v1h-1zM9 740h1v1h-1zM9 741h1v1h-1zM9 742h1v1h-1zM9 743h1v1h-1zM9 744h1v1h-1zM13 736h5v1h-5zM13 737h1v1h-1zM13 738h1v1h-1zM13 739h4v1h-4zM17 740h1v1h-1zM17 741h1v1h-1zM17 742h1v1h-1zM13 743h1v1h-1zM17 743h1v1h-1zM14 744h3v1h-3zM20 736h3v1h-3zM19 737h1v1h-1zM23 737h1v1h-1zM19 738h1v1h-1zM23 738h1v1h-1zM19 739h1v1h-1zM23 739h1v1h-1zM19 740h1v1h-1zM23 740h1v1h-1zM19 741h1v1h-1zM23 741h1v1h-1zM19 742h1v1h-1zM23 742h1v1h-1zM19 743h1v1h-1zM23 743h1v1h-1zM20 744h3v1h-3zM159 736h1v1h-1zM157 737h3v1h-3zM159 738h1v1h-1zM159 739h1v1h-1zM159 740h1v1h-1zM159 741h1v1h-1zM159 742h1v1h-1zM159 743h1v1h-1zM159 744h1v1h-1zM164 736h3v1h-3zM163 737h1v1h-1zM167 737h1v1h-1zM163 738h1v1h-1zM167 738h1v1h-1zM163 739h1v1h-1zM167 739h1v1h-1zM163 740h1v1h-1zM167 740h1v1h-1zM163 741h1v1h-1zM167 741h1v1h-1zM163 742h1v1h-1zM167 742h1v1h-1zM163 743h1v1h-1zM167 743h1v1h-1zM164 744h3v1h-3zM170 736h3v1h-3zM169 737h1v1h-1zM173 737h1v1h-1zM169 738h1v1h-1zM173 738h1v1h-1zM169 739h1v1h-1zM173 739h1v1h-1zM169 740h1v1h-1zM173 740h1v1h-1zM169 741h1v1h-1zM173 741h1v1h-1zM169 742h1v1h-1zM173 742h1v1h-1zM169 743h1v1h-1zM173 743h1v1h-1zM170 744h3v1h-3zM312 736h5v1h-5zM312 737h1v1h-1zM312 738h1v1h-1zM312 739h4v1h-4zM316 740h1v1h-1zM316 741h1v1h-1zM316 742h1v1h-1zM312 743h1v1h-1zM316 743h1v1h-1zM313 744h3v1h-3zM319 736h3v1h-3zM318 737h1v1h-1zM322 737h1v1h-1zM318 738h1v1h-1zM322 738h1v1h-1zM318 739h1v1h-1zM322 739h1v1h-1zM318 740h1v1h-1zM322 740h1v1h-1zM318 741h1v1h-1zM322 741h1v1h-1zM318 742h1v1h-1zM322 742h1v1h-1zM318 743h1v1h-1zM322 743h1v1h-1zM319 744h3v1h-3zM468 736h3v1h-3zM467 737h1v1h-1zM471 737h1v1h-1zM467 738h1v1h-1zM471 738h1v1h-1zM467 739h1v1h-1zM471 739h1v1h-1zM467 740h1v1h-1zM471 740h1v1h-1zM467 741h1v1h-1zM471 741h1v1h-1zM467 742h1v1h-1zM471 742h1v1h-1zM467 743h1v1h-1zM471 743h1v1h-1zM468 744h3v1h-3zM614 741h2v1h-2zM617 736h5v1h-5zM617 737h1v1h-1zM617 738h1v1h-1zM617 739h4v1h-4zM621 740h1v1h-1zM621 741h1v1h-1zM621 742h1v1h-1zM617 743h1v1h-1zM621 743h1v1h-1zM618 744h3v1h-3zM624 736h3v1h-3zM623 737h1v1h-1zM627 737h1v1h-1zM623 738h1v1h-1zM627 738h1v1h-1zM623 739h1v1h-1zM627 739h1v1h-1zM623 740h1v1h-1zM627 740h1v1h-1zM623 741h1v1h-1zM627 741h1v1h-1zM623 742h1v1h-1zM627 742h1v1h-1zM623 743h1v1h-1zM627 743h1v1h-1zM624 744h3v1h-3zM763 741h2v1h-2zM768 736h1v1h-1zM766 737h3v1h-3zM768 738h1v1h-1zM768 739h1v1h-1zM768 740h1v1h-1zM768 741h1v1h-1zM768 742h1v1h-1zM768 743h1v1h-1zM768 744h1v1h-1zM773 736h3v1h-3zM772 737h1v1h-1zM776 737h1v1h-1zM772 738h1v1h-1zM776 738h1v1h-1zM772 739h1v1h-1zM776 739h1v1h-1zM772 740h1v1h-1zM776 740h1v1h-1zM772 741h1v1h-1zM776 741h1v1h-1zM772 742h1v1h-1zM776 742h1v1h-1zM772 743h1v1h-1zM776 743h1v1h-1zM773 744h3v1h-3zM779 736h3v1h-3zM778 737h1v1h-1zM782 737h1v1h-1zM778 738h1v1h-1zM782 738h1v1h-1zM778 739h1v1h-1zM782 739h1v1h-1zM778 740h1v1h-1zM782 740h1v1h-1zM778 741h1v1h-1zM782 741h1v1h-1zM778 742h1v1h-1zM782 742h1v1h-1zM778 743h1v1h-1zM782 743h1v1h-1zM779 744h3v1h-3z" fill="#ff0000"/><path d="M14.0 718.0 L79.70 718.29 Q81.0 718.3 82.26 717.97 L82.74 717.83 Q84.0 717.5 85.29 717.32 L89.71 716.68 Q91.0 716.5 92.30 716.58 L97.70 716.92 Q99.0 717.0 100.29 717.14 L109.71 718.16 Q111.0 718.3 112.30 718.30 L219.70 718.00 Q221.0 718.0 222.26 717.66 L239.44 713.04 Q240.7 712.7 241.92 713.15 L253.78 717.55 Q255.0 718.0 256.30 717.95 L316.20 715.65 Q317.5 715.6 318.31 714.58 L321.39 710.72 Q322.2 709.7 322.40 708.42 L325.50 688.78 Q325.7 687.5 326.48 686.46 L331.92 679.14 Q332.7 678.1 333.19 676.90 L336.51 668.80 Q337.0 667.6 337.23 666.32 L339.97 651.28 Q340.2 650.0 340.81 651.15 L341.49 652.45 Q342.1 653.6 342.37 654.87 L345.33 668.73 Q345.6 670.0 346.35 671.06 L353.05 680.54 Q353.8 681.6 354.04 682.88 L356.26 694.72 Q356.5 696.0 356.86 697.25 L358.14 701.75 Q358.5 703.0 359.33 704.00 L360.17 705.00 Q361.0 706.0 361.83 705.00 L362.67 704.00 Q363.5 703.0 363.87 701.75 L364.93 698.25 Q365.3 697.0 365.39 695.70 L367.71 661.90 Q367.8 660.6 367.85 659.30 L368.95 629.10 Q369.0 627.8 369.03 626.50 L370.17 571.30 Q370.2 570.0 370.23 568.70 L372.47 479.30 Q372.5 478.0 372.61 476.70 L377.39 421.30 Q377.5 420.0 377.56 418.70 L383.34 282.80 Q383.4 281.5 383.45 282.80 L388.55 418.70 Q388.6 420.0 388.71 421.30 L393.39 476.70 Q393.5 478.0 393.59 479.30 L399.61 568.70 Q399.7 570.0 399.73 571.30 L400.97 635.90 Q401.0 637.2 401.05 638.50 L402.95 690.70 Q403.0 692.0 403.32 693.26 L405.18 700.74 Q405.5 702.0 406.17 703.11 L407.83 705.89 Q408.5 707.0 409.62 707.23 L409.88 707.27 Q411.0 707.5 411.63 706.36 L412.87 704.14 Q413.5 703.0 413.77 701.73 L414.73 697.27 Q415.0 696.0 415.11 694.70 L416.89 673.60 Q417.0 672.3 417.40 671.06 L421.20 659.44 Q421.6 658.2 421.82 656.92 L425.58 635.48 Q425.8 634.2 426.06 635.47 L429.54 652.33 Q429.8 653.6 430.12 654.86 L432.98 666.34 Q433.3 667.6 433.89 668.76 L439.81 680.44 Q440.4 681.6 440.59 682.89 L444.81 710.71 Q445.0 712.0 445.96 712.88 L448.74 715.42 Q449.7 716.3 451.00 716.41 L458.70 717.09 Q460.0 717.2 461.30 717.21 L511.70 717.49 Q513.0 717.5 514.24 717.12 L527.36 713.08 Q528.6 712.7 529.85 713.07 L545.35 717.63 Q546.6 718.0 547.90 718.00 L658.70 718.00 Q660.0 718.0 661.28 717.79 L667.72 716.71 Q669.0 716.5 670.28 716.71 L676.72 717.79 Q678.0 718.0 679.30 718.00 L922.0 718.0" fill="none" stroke="#ff00ff" stroke-width="1.1" transform="translate(0.8,0.45)" shape-rendering="crispEdges"/><rect x="20" y="717" width="3" height="1" fill="#ff00ff"/><rect x="24" y="717" width="6" height="1" fill="#ff00ff"/><rect x="30" y="720" width="6" height="1" fill="#ff00ff"/><rect x="37" y="719" width="3" height="1" fill="#ff00ff"/><rect x="40" y="717" width="8" height="1" fill="#ff00ff"/><rect x="49" y="717" width="8" height="1" fill="#ff00ff"/><rect x="66" y="719" width="5" height="1" fill="#ff00ff"/><rect x="72" y="719" width="3" height="1" fill="#ff00ff"/><rect x="75" y="719" width="5" height="1" fill="#ff00ff"/><rect x="82" y="719" width="4" height="1" fill="#ff00ff"/><rect x="86" y="719" width="3" height="1" fill="#ff00ff"/><rect x="89" y="719" width="2" height="1" fill="#ff00ff"/><rect x="91" y="719" width="3" height="1" fill="#ff00ff"/><rect x="94" y="717" width="6" height="1" fill="#ff00ff"/><rect x="101" y="717" width="3" height="1" fill="#ff00ff"/><rect x="107" y="719" width="3" height="1" fill="#ff00ff"/><rect x="113" y="716" width="6" height="1" fill="#ff00ff"/><rect x="121" y="719" width="3" height="1" fill="#ff00ff"/><rect x="127" y="717" width="3" height="1" fill="#ff00ff"/><rect x="133" y="719" width="6" height="1" fill="#ff00ff"/><rect x="148" y="720" width="2" height="1" fill="#ff00ff"/><rect x="153" y="717" width="3" height="1" fill="#ff00ff"/><rect x="156" y="719" width="3" height="1" fill="#ff00ff"/><rect x="159" y="720" width="6" height="1" fill="#ff00ff"/><rect x="168" y="719" width="2" height="1" fill="#ff00ff"/><rect x="173" y="719" width="3" height="1" fill="#ff00ff"/><rect x="176" y="716" width="8" height="1" fill="#ff00ff"/><rect x="187" y="719" width="2" height="1" fill="#ff00ff"/><rect x="189" y="719" width="8" height="1" fill="#ff00ff"/><rect x="197" y="719" width="4" height="1" fill="#ff00ff"/><rect x="201" y="719" width="3" height="1" fill="#ff00ff"/><rect x="206" y="720" width="8" height="1" fill="#ff00ff"/><rect x="223" y="719" width="2" height="1" fill="#ff00ff"/><rect x="225" y="719" width="2" height="1" fill="#ff00ff"/><rect x="228" y="719" width="4" height="1" fill="#ff00ff"/><rect x="233" y="717" width="3" height="1" fill="#ff00ff"/><rect x="236" y="719" width="8" height="1" fill="#ff00ff"/><rect x="244" y="719" width="3" height="1" fill="#ff00ff"/><rect x="248" y="719" width="4" height="1" fill="#ff00ff"/><rect x="259" y="719" width="3" height="1" fill="#ff00ff"/><rect x="262" y="717" width="8" height="1" fill="#ff00ff"/><rect x="272" y="720" width="2" height="1" fill="#ff00ff"/><rect x="276" y="719" width="4" height="1" fill="#ff00ff"/><rect x="280" y="719" width="2" height="1" fill="#ff00ff"/><rect x="286" y="720" width="4" height="1" fill="#ff00ff"/><rect x="291" y="719" width="3" height="1" fill="#ff00ff"/><rect x="296" y="717" width="6" height="1" fill="#ff00ff"/><rect x="302" y="719" width="8" height="1" fill="#ff00ff"/><rect x="312" y="719" width="4" height="1" fill="#ff00ff"/><rect x="452" y="719" width="5" height="1" fill="#ff00ff"/><rect x="457" y="717" width="5" height="1" fill="#ff00ff"/><rect x="463" y="717" width="6" height="1" fill="#ff00ff"/><rect x="472" y="719" width="4" height="1" fill="#ff00ff"/><rect x="487" y="719" width="2" height="1" fill="#ff00ff"/><rect x="491" y="720" width="4" height="1" fill="#ff00ff"/><rect x="496" y="717" width="2" height="1" fill="#ff00ff"/><rect x="499" y="719" width="3" height="1" fill="#ff00ff"/><rect x="503" y="719" width="6" height="1" fill="#ff00ff"/><rect x="509" y="716" width="5" height="1" fill="#ff00ff"/><rect x="516" y="720" width="2" height="1" fill="#ff00ff"/><rect x="520" y="719" width="3" height="1" fill="#ff00ff"/><rect x="523" y="719" width="6" height="1" fill="#ff00ff"/><rect x="529" y="719" width="4" height="1" fill="#ff00ff"/><rect x="536" y="717" width="3" height="1" fill="#ff00ff"/><rect x="541" y="719" width="5" height="1" fill="#ff00ff"/><rect x="547" y="719" width="4" height="1" fill="#ff00ff"/><rect x="551" y="719" width="4" height="1" fill="#ff00ff"/><rect x="557" y="717" width="2" height="1" fill="#ff00ff"/><rect x="559" y="719" width="2" height="1" fill="#ff00ff"/><rect x="563" y="719" width="3" height="1" fill="#ff00ff"/><rect x="567" y="719" width="8" height="1" fill="#ff00ff"/><rect x="578" y="719" width="3" height="1" fill="#ff00ff"/><rect x="581" y="719" width="5" height="1" fill="#ff00ff"/><rect x="587" y="719" width="3" height="1" fill="#ff00ff"/><rect x="593" y="720" width="3" height="1" fill="#ff00ff"/><rect x="598" y="719" width="6" height="1" fill="#ff00ff"/><rect x="607" y="719" width="3" height="1" fill="#ff00ff"/><rect x="611" y="719" width="2" height="1" fill="#ff00ff"/><rect x="616" y="717" width="5" height="1" fill="#ff00ff"/><rect x="624" y="717" width="3" height="1" fill="#ff00ff"/><rect x="627" y="719" width="6" height="1" fill="#ff00ff"/><rect x="641" y="717" width="3" height="1" fill="#ff00ff"/><rect x="646" y="717" width="8" height="1" fill="#ff00ff"/><rect x="664" y="719" width="2" height="1" fill="#ff00ff"/><rect x="670" y="719" width="2" height="1" fill="#ff00ff"/><rect x="672" y="716" width="2" height="1" fill="#ff00ff"/><rect x="674" y="719" width="2" height="1" fill="#ff00ff"/><rect x="677" y="719" width="3" height="1" fill="#ff00ff"/><rect x="683" y="719" width="6" height="1" fill="#ff00ff"/><rect x="689" y="717" width="2" height="1" fill="#ff00ff"/><rect x="694" y="719" width="3" height="1" fill="#ff00ff"/><rect x="697" y="717" width="2" height="1" fill="#ff00ff"/><rect x="700" y="719" width="8" height="1" fill="#ff00ff"/><rect x="709" y="719" width="3" height="1" fill="#ff00ff"/><rect x="712" y="717" width="3" height="1" fill="#ff00ff"/><rect x="717" y="717" width="4" height="1" fill="#ff00ff"/><rect x="721" y="720" width="8" height="1" fill="#ff00ff"/><rect x="731" y="719" width="2" height="1" fill="#ff00ff"/><rect x="735" y="719" width="5" height="1" fill="#ff00ff"/><rect x="740" y="719" width="5" height="1" fill="#ff00ff"/><rect x="746" y="717" width="6" height="1" fill="#ff00ff"/><rect x="753" y="719" width="2" height="1" fill="#ff00ff"/><rect x="755" y="716" width="4" height="1" fill="#ff00ff"/><rect x="759" y="719" width="3" height="1" fill="#ff00ff"/><rect x="763" y="717" width="4" height="1" fill="#ff00ff"/><rect x="770" y="719" width="8" height="1" fill="#ff00ff"/><rect x="778" y="719" width="8" height="1" fill="#ff00ff"/><rect x="789" y="717" width="3" height="1" fill="#ff00ff"/><rect x="795" y="719" width="3" height="1" fill="#ff00ff"/><rect x="798" y="719" width="3" height="1" fill="#ff00ff"/><rect x="804" y="717" width="5" height="1" fill="#ff00ff"/><rect x="812" y="717" width="8" height="1" fill="#ff00ff"/><rect x="829" y="717" width="3" height="1" fill="#ff00ff"/><rect x="832" y="717" width="4" height="1" fill="#ff00ff"/><rect x="838" y="719" width="2" height="1" fill="#ff00ff"/><rect x="840" y="719" width="6" height="1" fill="#ff00ff"/><rect x="847" y="717" width="6" height="1" fill="#ff00ff"/><rect x="855" y="719" width="3" height="1" fill="#ff00ff"/><rect x="860" y="719" width="3" height="1" fill="#ff00ff"/><rect x="865" y="719" width="2" height="1" fill="#ff00ff"/><rect x="867" y="717" width="6" height="1" fill="#ff00ff"/><rect x="873" y="717" width="8" height="1" fill="#ff00ff"/><rect x="881" y="717" width="4" height="1" fill="#ff00ff"/><rect x="885" y="719" width="5" height="1" fill="#ff00ff"/><rect x="891" y="719" width="2" height="1" fill="#ff00ff"/><rect x="894" y="719" width="4" height="1" fill="#ff00ff"/><rect x="901" y="717" width="2" height="1" fill="#ff00ff"/><rect x="903" y="719" width="2" height="1" fill="#ff00ff"/><rect x="907" y="716" width="6" height="1" fill="#ff00ff"/><rect x="915" y="717" width="8" height="1" fill="#ff00ff"/><path d="M14.0 718.0 L79.70 718.29 Q81.0 718.3 82.26 717.97 L82.74 717.83 Q84.0 717.5 85.29 717.32 L89.71 716.68 Q91.0 716.5 92.30 716.58 L97.70 716.92 Q99.0 717.0 100.29 717.14 L109.71 718.16 Q111.0 718.3 112.30 718.30 L219.70 718.00 Q221.0 718.0 222.26 717.66 L239.44 713.04 Q240.7 712.7 241.92 713.15 L253.78 717.55 Q255.0 718.0 256.30 717.95 L316.20 715.65 Q317.5 715.6 318.31 714.58 L321.39 710.72 Q322.2 709.7 322.40 708.42 L325.50 688.78 Q325.7 687.5 326.48 686.46 L331.92 679.14 Q332.7 678.1 333.19 676.90 L336.51 668.80 Q337.0 667.6 337.23 666.32 L339.97 651.28 Q340.2 650.0 340.81 651.15 L341.49 652.45 Q342.1 653.6 342.37 654.87 L345.33 668.73 Q345.6 670.0 346.35 671.06 L353.05 680.54 Q353.8 681.6 354.04 682.88 L356.26 694.72 Q356.5 696.0 356.86 697.25 L358.14 701.75 Q358.5 703.0 359.33 704.00 L360.17 705.00 Q361.0 706.0 361.83 705.00 L362.67 704.00 Q363.5 703.0 363.87 701.75 L364.93 698.25 Q365.3 697.0 365.39 695.70 L367.71 661.90 Q367.8 660.6 367.85 659.30 L368.95 629.10 Q369.0 627.8 369.03 626.50 L370.17 571.30 Q370.2 570.0 370.23 568.70 L372.47 479.30 Q372.5 478.0 372.61 476.70 L377.39 421.30 Q377.5 420.0 377.56 418.70 L383.34 282.80 Q383.4 281.5 383.45 282.80 L388.55 418.70 Q388.6 420.0 388.71 421.30 L393.39 476.70 Q393.5 478.0 393.59 479.30 L399.61 568.70 Q399.7 570.0 399.73 571.30 L400.97 635.90 Q401.0 637.2 401.05 638.50 L402.95 690.70 Q403.0 692.0 403.32 693.26 L405.18 700.74 Q405.5 702.0 406.17 703.11 L407.83 705.89 Q408.5 707.0 409.62 707.23 L409.88 707.27 Q411.0 707.5 411.63 706.36 L412.87 704.14 Q413.5 703.0 413.77 701.73 L414.73 697.27 Q415.0 696.0 415.11 694.70 L416.89 673.60 Q417.0 672.3 417.40 671.06 L421.20 659.44 Q421.6 658.2 421.82 656.92 L425.58 635.48 Q425.8 634.2 426.06 635.47 L429.54 652.33 Q429.8 653.6 430.12 654.86 L432.98 666.34 Q433.3 667.6 433.89 668.76 L439.81 680.44 Q440.4 681.6 440.59 682.89 L444.81 710.71 Q445.0 712.0 445.96 712.88 L448.74 715.42 Q449.7 716.3 451.00 716.41 L458.70 717.09 Q460.0 717.2 461.30 717.21 L511.70 717.49 Q513.0 717.5 514.24 717.12 L527.36 713.08 Q528.6 712.7 529.85 713.07 L545.35 717.63 Q546.6 718.0 547.90 718.00 L658.70 718.00 Q660.0 718.0 661.28 717.79 L667.72 716.71 Q669.0 716.5 670.28 716.71 L676.72 717.79 Q678.0 718.0 679.30 718.00 L922.0 718.0" fill="none" stroke="#ffff00" stroke-width="1.1" transform="translate(0,0.45)" shape-rendering="crispEdges"/></g></svg><div style="position:absolute;left:405px;top:202px;width:526px;height:420px;background:#2a2f33"></div><div style="position:absolute;left:406px;top:203px;width:523px;height:417px;background:#565e65"></div><div style="position:absolute;left:407px;top:204px;width:522px;height:416px;background:#454c52"></div><div style="position:absolute;left:409px;top:230px;width:518px;height:388px;background:#d4d0c8"></div><svg width="939" height="770" style="left:0;top:0"><path d="M416.6 213.2 Q416.4 219.2 421 219.4 Q425.6 219.2 425.4 213.2 Z" fill="#c81a1a"/><path d="M417.6 212.6 L424.4 212.6 L425.4 213.2 L416.6 213.2 Z" fill="#ff4040"/><path d="M417.2 207.3 Q416 211 416.5 214.5 Q417.2 219.2 421 219.4 Q424.8 219.2 425.5 214.5 Q426 211 424.8 207.3 Z" fill="none" stroke="#aeb3b6" stroke-width="1"/><path d="M417.4 207.5 L424.6 207.5" stroke="#d0d4d6" stroke-width="1.2"/><path d="M418.4 209.5 L418.2 216" stroke="#e0e0e0" stroke-width="0.8" opacity="0.7"/><rect x="420.4" y="219.3" width="1.3" height="5.5" fill="#a8acae"/><ellipse cx="421" cy="225.3" rx="3.8" ry="1.4" fill="none" stroke="#b8bcbe" stroke-width="1"/></svg><div style="position:absolute;left:434px;top:207px;width:20px;height:20px;background:#4d555b;border-radius:3px"></div><svg width="939" height="770" style="left:0;top:0"><path d="M442.6 213.2 L446.4 213.2 L448.6 215.4 L448.6 219.3 L446.4 221.5 L442.6 221.5 L440.4 219.3 L440.4 215.4 Z" fill="none" stroke="#fff" stroke-width="3.1"/><path d="M439.2 212.1 L443.4 216.3 M445.6 218.4 L449.8 222.6" stroke="#4d555b" stroke-width="0.9"/></svg><div class="t" style="left:460px;top:212px;font-size:13.25px;color:#eef0f0">VAS: Dipolar-Chemical Shift Spin Pair</div><div style="position:absolute;left:859px;top:207px;width:21px;height:20px;background:#4d555b;border-radius:3px"></div><div style="position:absolute;left:882px;top:207px;width:21px;height:20px;background:#4d555b;border-radius:3px"></div><div style="position:absolute;left:905px;top:207px;width:21px;height:20px;background:#4d555b;border-radius:3px"></div><div style="position:absolute;left:864px;top:219px;width:11px;height:2.5px;background:#fff"></div><div style="position:absolute;left:887px;top:212px;width:11px;height:11px;border:2px solid #fff;box-sizing:border-box"></div><svg width="21" height="21" style="left:905px;top:207px"><path d="M5.2 5.2 L15.5 15.6 M15.5 5.2 L5.2 15.6" stroke="#fff" stroke-width="2.2"/></svg><div style="position:absolute;left:418px;top:239px;width:245px;height:209px;border:1px solid #fff"></div><div style="position:absolute;left:417px;top:238px;width:245px;height:209px;border:1px solid #808080"></div><div style="position:absolute;left:418px;top:457px;width:245px;height:87px;border:1px solid #fff"></div><div style="position:absolute;left:417px;top:456px;width:245px;height:87px;border:1px solid #808080"></div><div style="position:absolute;left:674px;top:239px;width:245px;height:305px;border:1px solid #fff"></div><div style="position:absolute;left:673px;top:238px;width:245px;height:305px;border:1px solid #808080"></div><div class="t" style="left:423px;top:245.6px;font-size:13px;font-weight:bold;color:#000;letter-spacing:0.3px">Site:</div><div class="t" style="left:476px;top:245.6px;font-size:13px;font-weight:bold;color:#000;letter-spacing:0.3px">1</div><div class="t" style="left:423px;top:275.6px;font-size:13px;font-weight:bold;color:#000;letter-spacing:0.3px">Rel. <u>I</u>ntensity:</div><div style="position:absolute;left:533px;top:270px;width:80px;height:24px;background:#fff"></div><div style="position:absolute;left:533px;top:270px;width:79px;height:23px;background:#808080"></div><div style="position:absolute;left:534px;top:271px;width:78px;height:22px;background:#d4d0c8"></div><div style="position:absolute;left:534px;top:271px;width:77px;height:21px;background:#404040"></div><div style="position:absolute;left:535px;top:272px;width:76px;height:20px;background:#fff"></div><div style="position:absolute;left:536px;top:273px;width:69px;height:16px;background:#0a246a"></div><div class="t" style="left:536px;top:274.8px;font-size:13px;font-weight:bold;color:#fff;letter-spacing:0.65px">100.00000</div><div class="t" style="left:628px;top:275.6px;font-size:13px;font-weight:bold;color:#000;letter-spacing:0.3px">%</div><div style="position:absolute;left:425px;top:305px;width:13px;height:13px;background:#fff"></div><div style="position:absolute;left:425px;top:305px;width:12px;height:12px;background:#808080"></div><div style="position:absolute;left:426px;top:306px;width:11px;height:11px;background:#d4d0c8"></div><div style="position:absolute;left:426px;top:306px;width:10px;height:10px;background:#404040"></div><div style="position:absolute;left:427px;top:307px;width:9px;height:9px;background:#d4d0c8"></div><div class="t" style="left:443px;top:305.0px;font-size:13px;font-weight:bold;color:#000;letter-spacing:0.3px;color:#808080;text-shadow:1px 1px 0 #fff"><u>T</u>ie to previous site</div><div style="position:absolute;left:423px;top:334px;width:12px;height:12px;background:#fff"></div><div style="position:absolute;left:423px;top:334px;width:11px;height:11px;background:#808080"></div><div style="position:absolute;left:424px;top:335px;width:10px;height:10px;background:#d4d0c8"></div><div style="position:absolute;left:424px;top:335px;width:9px;height:9px;background:#404040"></div><div style="position:absolute;left:425px;top:336px;width:8px;height:8px;background:#fff"></div><div class="t" style="left:441px;top:333.40000000000003px;font-size:13px;font-weight:bold;color:#000;letter-spacing:0.3px"><u>S</u>peedy calculation</div><div class="t" style="left:425px;top:362.8px;font-size:13px;font-weight:bold;color:#000;letter-spacing:0.3px">Con<u>v</u>ention:</div><div style="position:absolute;left:515px;top:358px;width:137px;height:24px;background:#fff"></div><div style="position:absolute;left:515px;top:358px;width:136px;height:23px;background:#808080"></div><div style="position:absolute;left:516px;top:359px;width:135px;height:22px;background:#d4d0c8"></div><div style="position:absolute;left:516px;top:359px;width:134px;height:21px;background:#404040"></div><div style="position:absolute;left:517px;top:360px;width:133px;height:20px;background:#fff"></div><div style="position:absolute;left:633px;top:360px;width:17px;height:20px;background:#404040"></div><div style="position:absolute;left:633px;top:360px;width:16px;height:19px;background:#ffffff"></div><div style="position:absolute;left:634px;top:361px;width:15px;height:18px;background:#808080"></div><div style="position:absolute;left:634px;top:361px;width:14px;height:17px;background:#d4d0c8"></div><div style="position:absolute;left:635px;top:362px;width:13px;height:16px;background:#d4d0c8"></div><svg width="10" height="6" style="left:638px;top:368px"><path d="M0.5 0.5 L7.5 0.5 L4 4.5 Z" fill="#000"/></svg><div class="t" style="left:520px;top:363px;font-size:13px;font-weight:bold;color:#000">STANDARD</div><div class="t" style="left:427px;top:394.6px;font-size:13px;font-weight:bold;color:#000;letter-spacing:0.3px">VA<u>S</u> angle:</div><div style="position:absolute;left:515px;top:390px;width:104px;height:24px;background:#fff"></div><div style="position:absolute;left:515px;top:390px;width:103px;height:23px;background:#808080"></div><div style="position:absolute;left:516px;top:391px;width:102px;height:22px;background:#d4d0c8"></div><div style="position:absolute;left:516px;top:391px;width:101px;height:21px;background:#404040"></div><div style="position:absolute;left:517px;top:392px;width:100px;height:20px;background:#fff"></div><div class="t" style="left:518px;top:394px;font-size:13px;font-weight:bold;color:#000;letter-spacing:0.65px">65.39000</div><div class="t" style="left:626px;top:394.6px;font-size:13px;font-weight:bold;color:#000;letter-spacing:0.3px">deg</div><div class="t" style="left:427px;top:420.6px;font-size:13px;font-weight:bold;color:#000;letter-spacing:0.3px">VAS <u>f</u>req.:</div><div style="position:absolute;left:515px;top:416px;width:104px;height:24px;background:#fff"></div><div style="position:absolute;left:515px;top:416px;width:103px;height:23px;background:#808080"></div><div style="position:absolute;left:516px;top:417px;width:102px;height:22px;background:#d4d0c8"></div><div style="position:absolute;left:516px;top:417px;width:101px;height:21px;background:#404040"></div><div style="position:absolute;left:517px;top:418px;width:100px;height:20px;background:#fff"></div><div class="t" style="left:518px;top:420px;font-size:13px;font-weight:bold;color:#000;letter-spacing:0.65px">3850.00000</div><div class="t" style="left:626px;top:420.6px;font-size:13px;font-weight:bold;color:#000;letter-spacing:0.3px">Hz</div><div class="t" style="left:427px;top:469.6px;font-size:13px;font-weight:bold;color:#000;letter-spacing:0.3px">Delta-<u>1</u>1:</div><div style="position:absolute;left:513px;top:464px;width:104px;height:24px;background:#fff"></div><div style="position:absolute;left:513px;top:464px;width:103px;height:23px;background:#808080"></div><div style="position:absolute;left:514px;top:465px;width:102px;height:22px;background:#d4d0c8"></div><div style="position:absolute;left:514px;top:465px;width:101px;height:21px;background:#404040"></div><div style="position:absolute;left:515px;top:466px;width:100px;height:20px;background:#fff"></div><div class="t" style="left:516px;top:468px;font-size:13px;font-weight:bold;color:#000;letter-spacing:0.65px">49.60000</div><div class="t" style="left:627px;top:469.6px;font-size:13px;font-weight:bold;color:#000;letter-spacing:0.3px">ppm</div><div class="t" style="left:427px;top:495.6px;font-size:13px;font-weight:bold;color:#000;letter-spacing:0.3px">Delta-<u>2</u>2:</div><div style="position:absolute;left:513px;top:490px;width:104px;height:24px;background:#fff"></div><div style="position:absolute;left:513px;top:490px;width:103px;height:23px;background:#808080"></div><div style="position:absolute;left:514px;top:491px;width:102px;height:22px;background:#d4d0c8"></div><div style="position:absolute;left:514px;top:491px;width:101px;height:21px;background:#404040"></div><div style="position:absolute;left:515px;top:492px;width:100px;height:20px;background:#fff"></div><div class="t" style="left:516px;top:494px;font-size:13px;font-weight:bold;color:#000;letter-spacing:0.65px">26.50000</div><div class="t" style="left:627px;top:495.6px;font-size:13px;font-weight:bold;color:#000;letter-spacing:0.3px">ppm</div><div class="t" style="left:427px;top:521.6px;font-size:13px;font-weight:bold;color:#000;letter-spacing:0.3px">Delta-<u>3</u>3:</div><div style="position:absolute;left:513px;top:516px;width:104px;height:24px;background:#fff"></div><div style="position:absolute;left:513px;top:516px;width:103px;height:23px;background:#808080"></div><div style="position:absolute;left:514px;top:517px;width:102px;height:22px;background:#d4d0c8"></div><div style="position:absolute;left:514px;top:517px;width:101px;height:21px;background:#404040"></div><div style="position:absolute;left:515px;top:518px;width:100px;height:20px;background:#fff"></div><div class="t" style="left:516px;top:520px;font-size:13px;font-weight:bold;color:#000;letter-spacing:0.65px">7.60000</div><div class="t" style="left:627px;top:521.6px;font-size:13px;font-weight:bold;color:#000;letter-spacing:0.3px">ppm</div><div class="t" style="left:679px;top:246.6px;font-size:13px;font-weight:bold;color:#000;letter-spacing:0.3px;letter-spacing:0">Co<u>u</u>pled to:</div><div style="position:absolute;left:767px;top:242px;width:104px;height:24px;background:#fff"></div><div style="position:absolute;left:767px;top:242px;width:103px;height:23px;background:#808080"></div><div style="position:absolute;left:768px;top:243px;width:102px;height:22px;background:#d4d0c8"></div><div style="position:absolute;left:768px;top:243px;width:101px;height:21px;background:#404040"></div><div style="position:absolute;left:769px;top:244px;width:100px;height:20px;background:#fff"></div><div style="position:absolute;left:852px;top:244px;width:17px;height:20px;background:#404040"></div><div style="position:absolute;left:852px;top:244px;width:16px;height:19px;background:#ffffff"></div><div style="position:absolute;left:853px;top:245px;width:15px;height:18px;background:#808080"></div><div style="position:absolute;left:853px;top:245px;width:14px;height:17px;background:#d4d0c8"></div><div style="position:absolute;left:854px;top:246px;width:13px;height:16px;background:#d4d0c8"></div><svg width="10" height="6" style="left:857px;top:252px"><path d="M0.5 0.5 L7.5 0.5 L4 4.5 Z" fill="#000"/></svg><div class="t" style="left:772px;top:247px;font-size:13px;font-weight:bold;color:#000">Cd-113</div><div class="t" style="left:767px;top:271.6px;font-size:13px;font-weight:bold;color:#000;letter-spacing:0.3px">Spin:</div><div class="t" style="left:820px;top:271.6px;font-size:13px;font-weight:bold;color:#000;letter-spacing:0.3px">1/2</div><div class="t" style="left:679px;top:295.6px;font-size:13px;font-weight:bold;color:#000;letter-spacing:0.3px"><u>N</u>. A.:</div><div style="position:absolute;left:767px;top:290px;width:104px;height:24px;background:#fff"></div><div style="position:absolute;left:767px;top:290px;width:103px;height:23px;background:#808080"></div><div style="position:absolute;left:768px;top:291px;width:102px;height:22px;background:#d4d0c8"></div><div style="position:absolute;left:768px;top:291px;width:101px;height:21px;background:#404040"></div><div style="position:absolute;left:769px;top:292px;width:100px;height:20px;background:#fff"></div><div class="t" style="left:770px;top:294px;font-size:13px;font-weight:bold;color:#000;letter-spacing:0.65px">25.00000</div><div class="t" style="left:876px;top:295.6px;font-size:13px;font-weight:bold;color:#000;letter-spacing:0.3px">%</div><div style="position:absolute;left:679px;top:324px;width:12px;height:12px;background:#fff"></div><div style="position:absolute;left:679px;top:324px;width:11px;height:11px;background:#808080"></div><div style="position:absolute;left:680px;top:325px;width:10px;height:10px;background:#d4d0c8"></div><div style="position:absolute;left:680px;top:325px;width:9px;height:9px;background:#404040"></div><div style="position:absolute;left:681px;top:326px;width:8px;height:8px;background:#fff"></div><div class="t" style="left:697px;top:323.6px;font-size:13px;font-weight:bold;color:#000;letter-spacing:0.3px"><u>H</u>omonuclear</div><div class="t" style="left:681px;top:365.6px;font-size:13px;font-weight:bold;color:#000;letter-spacing:0.3px"><u>D</u>:</div><div style="position:absolute;left:769px;top:360px;width:103px;height:24px;background:#fff"></div><div style="position:absolute;left:769px;top:360px;width:102px;height:23px;background:#808080"></div><div style="position:absolute;left:770px;top:361px;width:101px;height:22px;background:#d4d0c8"></div><div style="position:absolute;left:770px;top:361px;width:100px;height:21px;background:#404040"></div><div style="position:absolute;left:771px;top:362px;width:99px;height:20px;background:#fff"></div><div class="t" style="left:772px;top:364px;font-size:13px;font-weight:bold;color:#000;letter-spacing:0.65px">250.00000</div><div class="t" style="left:879px;top:366.6px;font-size:13px;font-weight:bold;color:#000;letter-spacing:0.3px">Hz</div><div class="t" style="left:681px;top:393.6px;font-size:13px;font-weight:bold;color:#000;letter-spacing:0.3px"><u>J</u>:</div><div style="position:absolute;left:769px;top:388px;width:103px;height:24px;background:#fff"></div><div style="position:absolute;left:769px;top:388px;width:102px;height:23px;background:#808080"></div><div style="position:absolute;left:770px;top:389px;width:101px;height:22px;background:#d4d0c8"></div><div style="position:absolute;left:770px;top:389px;width:100px;height:21px;background:#404040"></div><div style="position:absolute;left:771px;top:390px;width:99px;height:20px;background:#fff"></div><div class="t" style="left:772px;top:392px;font-size:13px;font-weight:bold;color:#000;letter-spacing:0.65px">2340.00000</div><div class="t" style="left:879px;top:394.6px;font-size:13px;font-weight:bold;color:#000;letter-spacing:0.3px">Hz</div><div class="t" style="left:681px;top:421.6px;font-size:13px;font-weight:bold;color:#000;letter-spacing:0.3px">Del<u>t</u>a-J:</div><div style="position:absolute;left:769px;top:416px;width:103px;height:24px;background:#fff"></div><div style="position:absolute;left:769px;top:416px;width:102px;height:23px;background:#808080"></div><div style="position:absolute;left:770px;top:417px;width:101px;height:22px;background:#d4d0c8"></div><div style="position:absolute;left:770px;top:417px;width:100px;height:21px;background:#404040"></div><div style="position:absolute;left:771px;top:418px;width:99px;height:20px;background:#fff"></div><div class="t" style="left:772px;top:420px;font-size:13px;font-weight:bold;color:#000;letter-spacing:0.65px">0.00000</div><div class="t" style="left:879px;top:422.6px;font-size:13px;font-weight:bold;color:#000;letter-spacing:0.3px">Hz</div><div class="t" style="left:683px;top:468.6px;font-size:13px;font-weight:bold;color:#000;letter-spacing:0.3px">Alpha:</div><div style="position:absolute;left:769px;top:462px;width:103px;height:24px;background:#fff"></div><div style="position:absolute;left:769px;top:462px;width:102px;height:23px;background:#808080"></div><div style="position:absolute;left:770px;top:463px;width:101px;height:22px;background:#d4d0c8"></div><div style="position:absolute;left:770px;top:463px;width:100px;height:21px;background:#404040"></div><div style="position:absolute;left:771px;top:464px;width:99px;height:20px;background:#fff"></div><div class="t" style="left:772px;top:466px;font-size:13px;font-weight:bold;color:#000;letter-spacing:0.65px">0.00000</div><div class="t" style="left:879px;top:468.6px;font-size:13px;font-weight:bold;color:#000;letter-spacing:0.3px">deg</div><div class="t" style="left:681px;top:495.6px;font-size:13px;font-weight:bold;color:#000;letter-spacing:0.3px">B<u>e</u>ta:</div><div style="position:absolute;left:769px;top:490px;width:103px;height:24px;background:#fff"></div><div style="position:absolute;left:769px;top:490px;width:102px;height:23px;background:#808080"></div><div style="position:absolute;left:770px;top:491px;width:101px;height:22px;background:#d4d0c8"></div><div style="position:absolute;left:770px;top:491px;width:100px;height:21px;background:#404040"></div><div style="position:absolute;left:771px;top:492px;width:99px;height:20px;background:#fff"></div><div class="t" style="left:772px;top:494px;font-size:13px;font-weight:bold;color:#000;letter-spacing:0.65px">0.00000</div><div class="t" style="left:879px;top:495.6px;font-size:13px;font-weight:bold;color:#000;letter-spacing:0.3px">deg</div><div style="position:absolute;left:455px;top:562px;width:66px;height:42px;background:#404040"></div><div style="position:absolute;left:455px;top:562px;width:65px;height:41px;background:#ffffff"></div><div style="position:absolute;left:456px;top:563px;width:64px;height:40px;background:#808080"></div><div style="position:absolute;left:456px;top:563px;width:63px;height:39px;background:#d4d0c8"></div><div style="position:absolute;left:457px;top:564px;width:62px;height:38px;background:#d4d0c8"></div><div style="position:absolute;left:573px;top:562px;width:66px;height:42px;background:#000"></div><div style="position:absolute;left:574px;top:563px;width:64px;height:40px;background:#404040"></div><div style="position:absolute;left:574px;top:563px;width:63px;height:39px;background:#ffffff"></div><div style="position:absolute;left:575px;top:564px;width:62px;height:38px;background:#808080"></div><div style="position:absolute;left:575px;top:564px;width:61px;height:37px;background:#d4d0c8"></div><div style="position:absolute;left:576px;top:565px;width:60px;height:36px;background:#d4d0c8"></div><div style="position:absolute;left:691px;top:562px;width:66px;height:42px;background:#404040"></div><div style="position:absolute;left:691px;top:562px;width:65px;height:41px;background:#ffffff"></div><div style="position:absolute;left:692px;top:563px;width:64px;height:40px;background:#808080"></div><div style="position:absolute;left:692px;top:563px;width:63px;height:39px;background:#d4d0c8"></div><div style="position:absolute;left:693px;top:564px;width:62px;height:38px;background:#d4d0c8"></div><div style="position:absolute;left:811px;top:562px;width:66px;height:42px;background:#404040"></div><div style="position:absolute;left:811px;top:562px;width:65px;height:41px;background:#ffffff"></div><div style="position:absolute;left:812px;top:563px;width:64px;height:40px;background:#808080"></div><div style="position:absolute;left:812px;top:563px;width:63px;height:39px;background:#d4d0c8"></div><div style="position:absolute;left:813px;top:564px;width:62px;height:38px;background:#d4d0c8"></div><div class="t" style="left:500px;top:577px;font-size:12px;color:#000;letter-spacing:-0.55px"><u>L</u>B</div><div class="t" style="left:613px;top:577px;font-size:12px;color:#000;letter-spacing:-0.55px">OK</div><div class="t" style="left:716px;top:577px;font-size:12px;color:#000;letter-spacing:-0.55px">Cancel</div><div class="t" style="left:843px;top:577px;font-size:12px;color:#000;letter-spacing:-0.55px">Help</div><svg width="939" height="770" style="left:0;top:0" fill="none"><path d="M461.2 591.5 Q465 589.5 468.2 586 Q470 583 470.2 578 Q471 572 475.4 570.3 Q479.8 572 480.6 578 Q480.8 583 482.6 586 Q485.8 589.5 489.6 591.5" stroke="#0000ff" stroke-width="1.2"/><path d="M475.5 575 L475.5 594 M466 593.5 L485.5 593.5" stroke="#ff00ff" stroke-width="1.3"/><path d="M473.5 580.5 L465.3 580.5 M468 577.7 L465.3 580.5 L468 583.3 M477.5 580.5 L485.7 580.5 M483 577.7 L485.7 580.5 L483 583.3" stroke="#000" stroke-width="3.2" stroke-linejoin="miter"/><path d="M473 580.5 L465.8 580.5 M468 578.3 L465.8 580.5 L468 582.7 M478 580.5 L485.2 580.5 M483 578.3 L485.2 580.5 L483 582.7" stroke="#00ffff" stroke-width="1.3" stroke-linejoin="miter"/></svg><svg width="939" height="770" style="left:0;top:0" fill="none" stroke-linejoin="miter" stroke-linecap="butt"><path d="M586.6 578.6 L586.8 589.8 L605.2 571.6" stroke="#808080" stroke-width="5.2" transform="translate(2,2)" /><path d="M586.6 578.6 L586.8 589.8 L605.2 571.6" stroke="#000080" stroke-width="5.2" transform="translate(0.9,0.9)" /><path d="M586.6 578.6 L586.8 589.8 L605.2 571.6" stroke="#00ff00" stroke-width="5.2" transform="translate(-0.7,-0.7)" /><path d="M586.6 578.6 L586.8 589.8 L605.2 571.6" stroke="#008000" stroke-width="4.6000000000000005" /><path d="M700.5 572.5 L711.8 589.8 M714 571.8 L699 590" stroke="#808080" stroke-width="5" transform="translate(2,2)" /><path d="M700.5 572.5 L711.8 589.8 M714 571.8 L699 590" stroke="#000000" stroke-width="5" transform="translate(0.9,0.9)" /><path d="M700.5 572.5 L711.8 589.8 M714 571.8 L699 590" stroke="#ff0000" stroke-width="5" transform="translate(-0.7,-0.7)" /><path d="M700.5 572.5 L711.8 589.8 M714 571.8 L699 590" stroke="#800000" stroke-width="4.4" /><path d="M823.8 574.2 Q825 569.2 830 569 Q835.5 569 835.2 573.8 Q835 577 831 580 Q828.8 582 829 585.5" stroke="#808080" stroke-width="4.6" transform="translate(2,2)" /><path d="M823.8 574.2 Q825 569.2 830 569 Q835.5 569 835.2 573.8 Q835 577 831 580 Q828.8 582 829 585.5" stroke="#000080" stroke-width="4.6" transform="translate(0.9,0.9)" /><path d="M823.8 574.2 Q825 569.2 830 569 Q835.5 569 835.2 573.8 Q835 577 831 580 Q828.8 582 829 585.5" stroke="#00ffff" stroke-width="4.6" transform="translate(-0.7,-0.7)" /><path d="M823.8 574.2 Q825 569.2 830 569 Q835.5 569 835.2 573.8 Q835 577 831 580 Q828.8 582 829 585.5" stroke="#008080" stroke-width="3.9999999999999996" /></svg><svg width="939" height="770" style="left:0;top:0"><circle cx="830.5" cy="593" r="2.8" fill="#808080"/><circle cx="829.4" cy="591.9" r="2.8" fill="#000080"/><circle cx="527.8" cy="590.3" r="0" fill="none"/><circle cx="827.8" cy="590.3" r="2.8" fill="#00ffff"/><circle cx="828.5" cy="591" r="2.4" fill="#008080"/></svg></body></html>
